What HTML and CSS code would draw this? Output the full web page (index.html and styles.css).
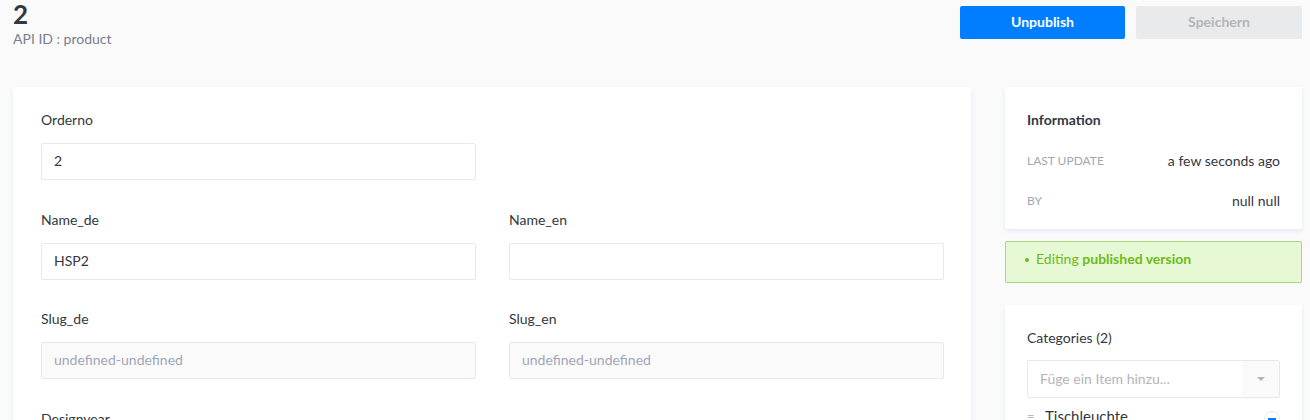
FILE: index.html
```html
<!DOCTYPE html>
<html>
<head>
<meta charset="utf-8">
<link rel="stylesheet" href="styles.css">
</head>
<body>
<div class="page">
  <header class="header">
    <div class="title-block">
      <h1 class="title">2</h1>
      <p class="subtitle">API ID : product</p>
    </div>
    <div class="actions">
      <button class="btn btn-primary">Unpublish</button>
      <button class="btn btn-disabled">Speichern</button>
    </div>
  </header>
  <div class="content">
    <section class="card form-card">
      <div class="form-grid">
        <div class="field">
          <label class="label">Orderno</label>
          <div class="input">2</div>
        </div>
        <div class="field"></div>
        <div class="field">
          <label class="label">Name_de</label>
          <div class="input">HSP2</div>
        </div>
        <div class="field">
          <label class="label">Name_en</label>
          <div class="input"></div>
        </div>
        <div class="field">
          <label class="label">Slug_de</label>
          <div class="input input-disabled">undefined-undefined</div>
        </div>
        <div class="field">
          <label class="label">Slug_en</label>
          <div class="input input-disabled">undefined-undefined</div>
        </div>
        <div class="field">
          <label class="label">Designyear</label>
          <div class="input"></div>
        </div>
      </div>
    </section>
    <aside class="sidebar">
      <section class="card info-card">
        <h2 class="card-title">Information</h2>
        <div class="info-row">
          <span class="info-key">Last update</span>
          <span class="info-val">a few seconds ago</span>
        </div>
        <div class="info-row">
          <span class="info-key">By</span>
          <span class="info-val">null null</span>
        </div>
      </section>
      <div class="status">
        <span class="dot"></span>
        <span>Editing <b>published version</b></span>
      </div>
      <section class="card cat-card">
        <h2 class="card-title cat-title">Categories (2)</h2>
        <div class="select">
          <span class="select-ph">Füge ein Item hinzu...</span>
          <span class="select-arrow"><span class="caret"></span></span>
        </div>
        <div class="cat-item">
          <span class="grip">=</span>
          <span class="cat-name">Tischleuchte</span>
          <span class="remove"><span class="minus"></span></span>
        </div>
      </section>
    </aside>
  </div>
</div>
</body>
</html>
```

FILE: styles.css
```css
* { box-sizing: border-box; }
html, body { margin: 0; padding: 0; }
body {
  background: #fafafb;
  font-family: Lato, "Open Sans", sans-serif;
  color: #333740;
  font-size: 14px;
  overflow: hidden;
  height: 420px;
}
.page { padding: 0 8px 0 13px; }
.header {
  display: flex;
  justify-content: space-between;
  align-items: flex-start;
  height: 87px;
}
.title {
  margin: 0;
  font-size: 26px;
  line-height: 28px;
  font-weight: 700;
  color: #333740;
}
.subtitle {
  margin: 1px 0 0;
  font-size: 14px;
  line-height: 20px;
  color: #787e8f;
}
.actions { display: flex; gap: 11px; padding-top: 6px; }
.btn {
  width: 165px;
  height: 33px;
  border: 0;
  border-radius: 2px;
  font-family: Lato, sans-serif;
  font-size: 14px;
  font-weight: 700;
  padding: 0 0 2px;
}
.btn-primary { background: #007eff; color: #fff; }
.btn-disabled { background: #e9eaeb; color: #b3b5b9; width: 166px; }
.content {
  display: flex;
  gap: 34px;
  align-items: flex-start;
}
.card {
  background: #fff;
  border-radius: 2px;
  box-shadow: 0 2px 4px #e3e9f3;
}
.form-card {
  width: 958px;
  height: 360px;
  padding: 22px 27px 0 28px;
}
.form-grid {
  display: grid;
  grid-template-columns: 435px 435px;
  column-gap: 33px;
  row-gap: 19.5px;
}
.field { height: 80px; }
.label {
  display: block;
  line-height: 22px;
  font-size: 14px;
  margin-bottom: 12px;
  color: #333740;
}
.input {
  height: 37px;
  border: 1px solid #e3e9f3;
  border-radius: 2px;
  padding: 0 12px;
  line-height: 34px;
  color: #333740;
  background: #fff;
}
.input-disabled { background: #fafafb; color: #9ea7b8; }
.sidebar {
  width: 297px;
  display: flex;
  flex-direction: column;
}
.info-card { height: 142px; padding: 22px 22px 0 22px; }
.card-title {
  margin: 0;
  font-size: 14px;
  line-height: 22px;
  font-weight: 700;
  color: #333740;
}
.info-row {
  display: flex;
  justify-content: space-between;
  align-items: center;
  height: 40px;
}
.info-card .card-title { margin-bottom: 9px; }
.info-key {
  font-size: 12px;
  text-transform: uppercase;
  color: #9ea7b8;
  font-weight: 400;
}
.info-val { font-size: 14px; color: #333740; }
.status {
  margin-top: 12px;
  height: 42px;
  background: #e6f8d4;
  border: 1px solid #aad67c;
  border-radius: 2px;
  color: #6dbb1a;
  display: flex;
  align-items: center;
  padding: 0 0 7px 19px;
  font-size: 14px;
}
.status b { font-weight: 700; }
.dot {
  width: 4px; height: 4px; border-radius: 50%;
  background: #6dbb1a;
  margin-right: 7px;
  margin-top: 2px;
}
.cat-card {
  margin-top: 22px;
  height: 140px;
  padding: 22px 22px 0 22px;
}
.cat-title { margin-bottom: 11px; font-weight: 400; }
.select {
  display: flex;
  height: 38px;
  border: 1px solid #e3e9f3;
  border-radius: 2px;
}
.select-ph {
  flex: 1;
  padding-left: 12px;
  line-height: 35px;
  color: #b3b5b9;
}
.select-arrow {
  width: 37px;
  background: #fafafb;
  display: flex;
  align-items: center;
  justify-content: center;
}
.caret {
  width: 0; height: 0;
  border-left: 4px solid transparent;
  border-right: 4px solid transparent;
  border-top: 4px solid #b3b5b9;
}
.cat-item {
  display: flex;
  align-items: center;
  height: 26px;
  margin-top: 5px;
}
.grip { color: #b3b5b9; width: 18px; padding-left: 0; font-size: 13px; }
.cat-name { flex: 1; font-size: 15px; color: #333740; }
.remove {
  width: 16px; height: 16px;
  border: 1px solid #e3e9f3;
  border-radius: 50%;
  display: flex; align-items: center; justify-content: center;
  margin-right: 0;
  margin-top: 6px;
}
.minus { width: 8px; height: 2px; background: #007eff; }
```
